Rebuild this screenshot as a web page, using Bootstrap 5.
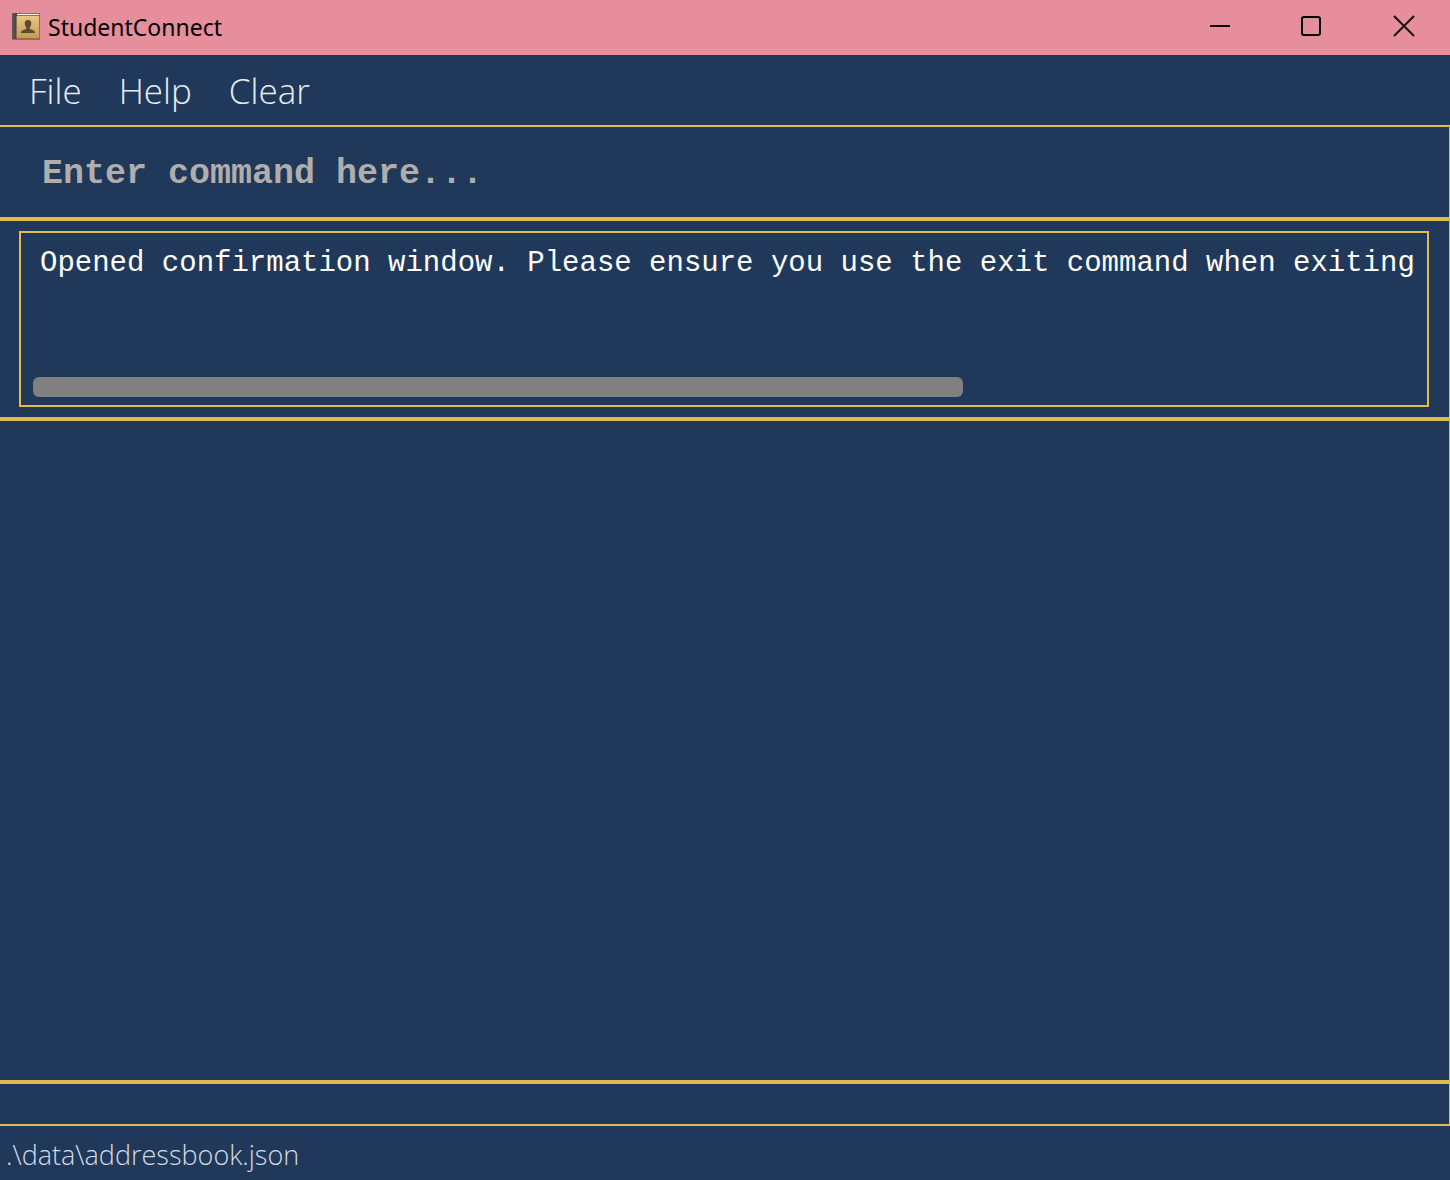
<!DOCTYPE html>
<html lang="en">
<head>
<meta charset="utf-8">
<meta name="viewport" content="width=device-width, initial-scale=1">
<title>StudentConnect</title>
<link href="https://cdn.jsdelivr.net/npm/bootstrap@5.3.0/dist/css/bootstrap.min.css" rel="stylesheet">
<style>
  :root { --navy: #203859; --gold: #e0bb4c; --pink: #e68e9c; }
  body { background: var(--navy); font-family: "Open Sans", "Noto Sans", sans-serif; }
  .title-bar { background: var(--pink); height: 55px; padding: 0 0 2px 12px; }
  .app-name { font-family: "Noto Sans", sans-serif; font-size: 23px; line-height: 32px; color: #000; }
  .win-btn { width: 92px; padding: 0 0 3px; color: #000; }
  .menu-strip { height: 70px; padding: 2px 0 0 29px; gap: 37px; }
  .menu-strip a { color: #e9edf2; font-size: 35px; font-weight: 300; line-height: 48px; }
  .workspace { border-top: 2px solid var(--gold); border-right: 1px solid var(--gold); border-bottom: 2px solid var(--gold); }
  .pane { border-bottom: 4px solid var(--gold); }
  .mono-text { font-family: "Liberation Mono", monospace; }
  .command-box { height: 90px; padding: 4px 42px 0; font-size: 35px; font-weight: 700; color: #fff; }
  .command-box::placeholder { color: #b0aeac; opacity: 1; }
  .result-pane { padding: 10px 20px 10px 19px; }
  .result-box { border: 2px solid var(--gold); height: 176px; padding: 14px 2px 8px 12px; }
  .result-text { font-size: 29px; line-height: 34px; padding: 0 0 0 7px; color: #fff; resize: none; overflow: hidden; white-space: pre; }
  .scroll-thumb { height: 20px; border-radius: 6px; background: #808080; }
  .spacer-strip { height: 40px; }
  .status-strip { height: 54px; padding: 4px 6px 0; color: #d3dbe3; font-size: 27px; font-weight: 300; line-height: 40px; }
</style>
</head>
<body class="vh-100 d-flex flex-column overflow-hidden">
<header class="title-bar d-flex align-items-stretch flex-shrink-0">
  <div class="d-flex align-items-center me-auto">
    <svg class="me-2" width="28" height="28" viewBox="0 0 28 28" aria-hidden="true">
      <defs>
        <linearGradient id="cover" x1="0" y1="0" x2="0" y2="1"><stop offset="0" stop-color="#e6c883"/><stop offset="1" stop-color="#c59a51"/></linearGradient>
        <linearGradient id="spine" x1="0" y1="0" x2="1" y2="0"><stop offset="0" stop-color="#655654"/><stop offset="1" stop-color="#454044"/></linearGradient>
      </defs>
      <rect x="0" y="26" width="28" height="1" fill="#a95f6c"/>
      <rect x="0" y="0" width="28" height="26" fill="#9a7137"/>
      <rect x="5" y="1" width="22" height="1" fill="#fff4df"/>
      <rect x="5" y="3" width="22" height="22" fill="url(#cover)"/>
      <rect x="0" y="0" width="5" height="26" fill="url(#spine)"/>
      <rect x="4" y="3" width="1" height="22" fill="#8b7259"/>
      <path d="M16 7c2.300 0 3.500 1.400 3.200 4-.2 1.700-.8 2.600-1.500 3.400v1.200c.2 1.200 5.300 1 5.300 4.400H9c0-3.400 5.100-3.200 5.300-4.400v-1.200c-.7-.8-1.300-1.700-1.500-3.400C12.500 8.400 13.700 7 16 7z" fill="#5b4933"/>
    </svg>
    <span class="app-name">StudentConnect</span>
  </div>
  <button class="win-btn btn border-0 rounded-0" aria-label="Minimize"><svg width="22" height="22" viewBox="0 0 22 22"><path d="M1 11h20" stroke="#000" stroke-width="2"/></svg></button>
  <button class="win-btn btn border-0 rounded-0" aria-label="Maximize"><svg width="22" height="22" viewBox="0 0 22 22"><rect x="1" y="2" width="18" height="18" rx="2" fill="none" stroke="#000" stroke-width="2"/></svg></button>
  <button class="win-btn btn border-0 rounded-0" aria-label="Close"><svg width="22" height="22" viewBox="0 0 22 22"><path d="M1 1l20 20M21 1L1 21" stroke="#1a1014" stroke-width="2"/></svg></button>
</header>
<nav class="menu-strip d-flex align-items-center flex-shrink-0" aria-label="Main menu">
  <a class="text-decoration-none" href="#">File</a>
  <a class="text-decoration-none" href="#">Help</a>
  <a class="text-decoration-none" href="#">Clear</a>
</nav>
<main class="workspace d-flex flex-column flex-grow-1">
  <div class="pane">
    <input class="command-box mono-text d-block w-100 border-0 bg-transparent" type="text" aria-label="Command" placeholder="Enter command here...">
  </div>
  <div class="pane result-pane">
    <div class="result-box d-flex flex-column">
      <textarea class="result-text mono-text flex-grow-1 w-100 border-0 bg-transparent" aria-label="Result" wrap="off" readonly>Opened confirmation window. Please ensure you use the exit command when exiting</textarea>
      <div class="scroll-thumb" style="width:66.8%"></div>
    </div>
  </div>
  <section class="pane flex-grow-1" aria-label="Students"></section>
  <div class="spacer-strip"></div>
</main>
<footer class="status-strip d-flex align-items-center flex-shrink-0"><span>.\data\addressbook.json</span></footer>
<script src="https://cdn.jsdelivr.net/npm/bootstrap@5.3.0/dist/js/bootstrap.bundle.min.js"></script>
</body>
</html>
